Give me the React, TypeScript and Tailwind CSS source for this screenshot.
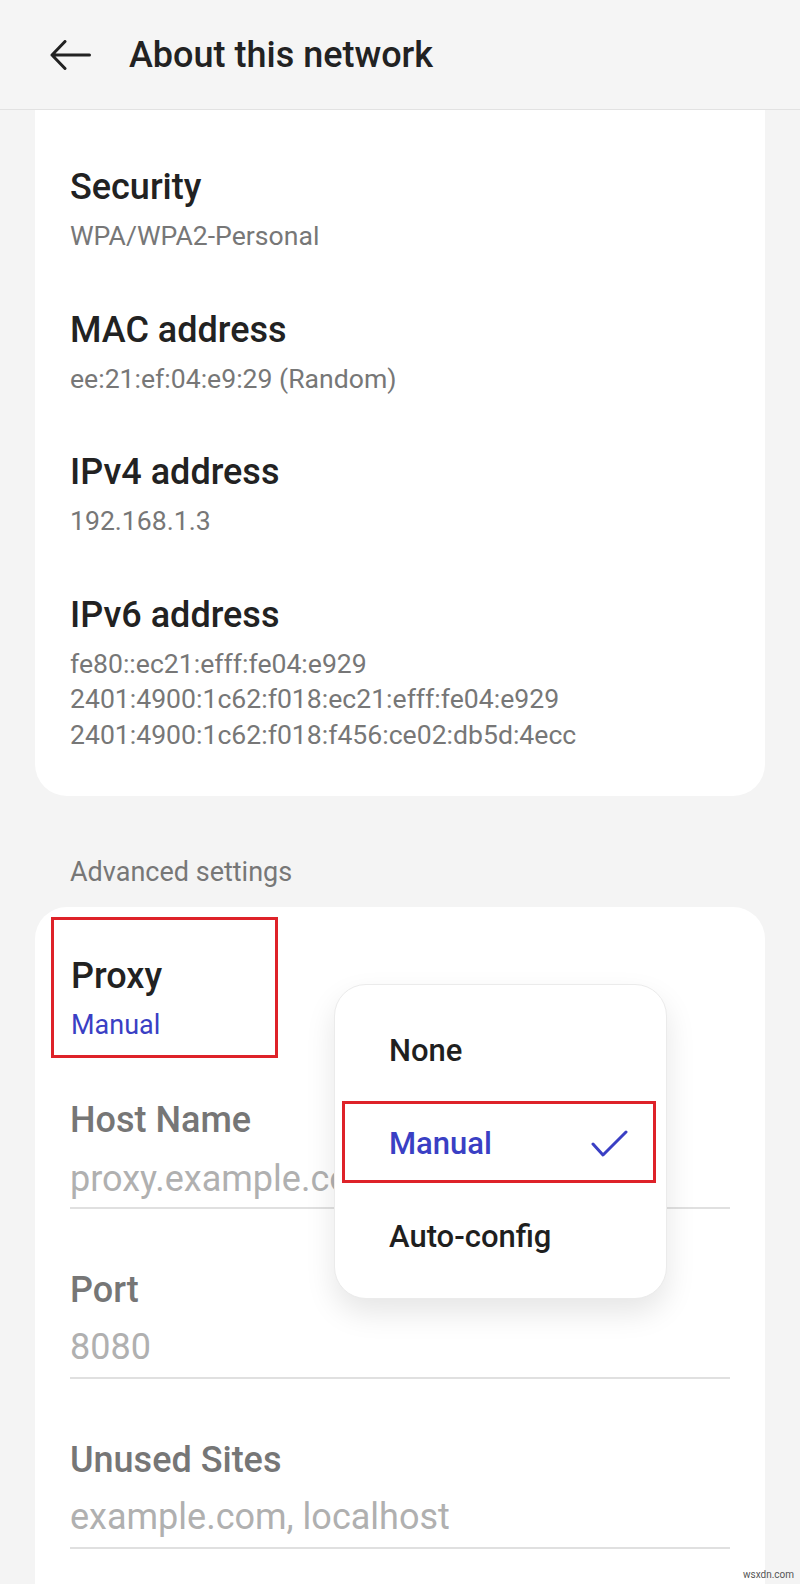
import React from "react";

const infoRows = [
  { title: "Security", lines: ["WPA/WPA2-Personal"] },
  { title: "MAC address", lines: ["ee:21:ef:04:e9:29 (Random)"] },
  { title: "IPv4 address", lines: ["192.168.1.3"] },
  {
    title: "IPv6 address",
    lines: [
      "fe80::ec21:efff:fe04:e929",
      "2401:4900:1c62:f018:ec21:efff:fe04:e929",
      "2401:4900:1c62:f018:f456:ce02:db5d:4ecc",
    ],
  },
];

const proxyFields = [
  { label: "Host Name", placeholder: "proxy.example.com", top: "mt-[40px]", gap: "mt-[15px]", line: "mt-[6px]" },
  { label: "Port", placeholder: "8080", top: "mt-[59px]", gap: "mt-[13px]", line: "mt-[8px]" },
  { label: "Unused Sites", placeholder: "example.com, localhost", top: "mt-[59px]", gap: "mt-[13px]", line: "mt-[8px]" },
];

const BackArrow = () => (
  <svg width="41" height="30" viewBox="0 0 41 30" fill="none">
    <path
      d="M39.5 15H2M15 1.5L2 15l13 13.5"
      stroke="#222"
      strokeWidth="3"
      strokeLinecap="round"
      strokeLinejoin="round"
    />
  </svg>
);

const Check = () => (
  <svg width="37" height="27" viewBox="0 0 37 27" fill="none">
    <path
      d="M2 14l10 11L35 2"
      stroke="#3a3fc4"
      strokeWidth="3"
      strokeLinecap="round"
      strokeLinejoin="round"
    />
  </svg>
);

const ProxyMenu = () => {
  const options = ["None", "Manual", "Auto-config"];
  return (
    <div className="absolute left-[299px] top-[77px] w-[333px] h-[315px] bg-white rounded-[32px] border border-[#ebebeb] shadow-[0_14px_30px_rgba(0,0,0,0.10)] pt-[19px]">
      {options.map((opt) => {
        const selected = opt === "Manual";
        return (
          <div key={opt} className="relative h-[93px] flex items-center pl-[54px] pr-[38px]">
            {selected && (
              <div className="absolute left-[7px] w-[314px] top-[4px] h-[82px] border-[3px] border-[#de2229]" />
            )}
            <span
              className={
                selected
                  ? "flex-1 text-[31px] leading-[40px] text-[#3a3fc4] font-medium"
                  : "flex-1 text-[31px] leading-[40px] text-[#1f1f1f] font-medium"
              }
            >
              {opt}
            </span>
            {selected && <Check />}
          </div>
        );
      })}
    </div>
  );
};

export default function App() {
  return (
    <div
      className="w-[800px] h-[1584px] overflow-hidden bg-[#f4f4f4] relative"
      style={{ fontFamily: "Roboto, 'Noto Sans', sans-serif" }}
    >
      <header className="h-[110px] bg-[#f5f5f5] border-b border-[#e2e2e2] flex items-center pl-[50px]">
        <BackArrow />
        <h1 className="ml-[38px] text-[36px] leading-[44px] text-[#222] font-medium">
          About this network
        </h1>
      </header>

      <section className="mx-[35px] bg-white rounded-b-[32px] pt-[55px] pb-[44px] px-[35px]">
        {infoRows.map((row, i) => (
          <div key={row.title} className={i > 0 ? "mt-[54px]" : ""}>
            <div className="text-[36px] leading-[44px] text-[#222] font-medium">
              {row.title}
            </div>
            <div className="mt-[9px]">
              {row.lines.map((line) => (
                <div key={line} className="text-[26.6px] leading-[35.5px] text-[#777]">
                  {line}
                </div>
              ))}
            </div>
          </div>
        ))}
      </section>

      <div className="mt-[58px] px-[70px] text-[27px] leading-[36px] text-[#777]">
        Advanced settings
      </div>

      <section className="relative mx-[35px] mt-[17px] bg-white rounded-t-[32px] pt-[10px] h-[700px]">
        <div className="ml-[16px] w-[227px] h-[141px] border-[3px] border-[#de2229] pt-[34px] pl-[17px]">
          <div className="text-[36px] leading-[44px] text-[#222] font-medium">Proxy</div>
          <div className="mt-[9px] text-[27px] leading-[36px] text-[#3a3fc4]">Manual</div>
        </div>

        <div className="px-[35px]">
          {proxyFields.map((f) => (
            <div key={f.label} className={f.top}>
              <div className="text-[36px] leading-[44px] text-[#767676] font-medium">{f.label}</div>
              <div className={`${f.gap} text-[36px] leading-[44px] text-[#b0b0b0]`}>
                {f.placeholder}
              </div>
              <div className={`${f.line} h-[2px] bg-[#e0e0e0]`} />
            </div>
          ))}
        </div>

        <ProxyMenu />
      </section>

      <span className="absolute right-[6px] bottom-[2px] text-[10px] text-[#555]">wsxdn.com</span>
    </div>
  );
}
